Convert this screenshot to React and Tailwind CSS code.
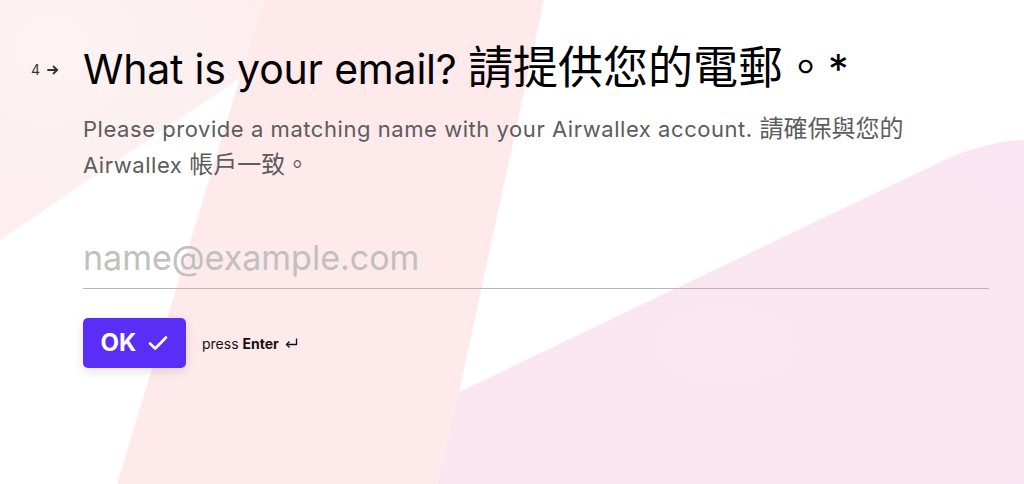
import React from "react";

function Background() {
  return (
    <svg
      className="absolute inset-0 h-full w-full"
      viewBox="0 0 1024 484"
      preserveAspectRatio="none"
      aria-hidden="true"
    >
      <defs>
        <radialGradient id="ga" cx="0.2" cy="0.2" r="0.9">
          <stop offset="0" stopColor="#fdf3f2" />
          <stop offset="1" stopColor="#fdeeee" />
        </radialGradient>
        <radialGradient id="gc" cx="0.5" cy="0.6" r="0.8">
          <stop offset="0" stopColor="#fbe7f0" />
          <stop offset="1" stopColor="#fae5f2" />
        </radialGradient>
      </defs>
      <polygon points="0,0 266,0 240,78 0,240" fill="url(#ga)" />
      <path
        d="M459 392 L932 166 Q980 142 1024 140 L1024 484 L430 484 Z"
        fill="url(#gc)"
      />
      <polygon points="264,0 544,0 459,392 438,484 117,484 240,78" fill="#fee9eb" />
    </svg>
  );
}

function SmallArrow() {
  return (
    <svg width="12" height="10" viewBox="0 0 12 10" fill="none">
      <path d="M1 5 H10" stroke="#333" strokeWidth="1.8" strokeLinecap="round" />
      <path
        d="M6.5 1.5 L10.2 5 L6.5 8.5"
        stroke="#333"
        strokeWidth="1.8"
        strokeLinecap="round"
        strokeLinejoin="round"
      />
    </svg>
  );
}

function CheckIcon() {
  return (
    <svg width="20" height="16" viewBox="0 0 20 16" fill="none">
      <path
        d="M2 8.5 L7.2 13.5 L18 2.5"
        stroke="white"
        strokeWidth="2.6"
        strokeLinecap="round"
        strokeLinejoin="round"
      />
    </svg>
  );
}

function ReturnIcon() {
  return (
    <svg width="13" height="11" viewBox="0 0 13 11" fill="none">
      <path d="M11.5 0.5 V6.5 H1.5" stroke="#111" strokeWidth="1.3" />
      <path d="M4.5 3.5 L1.5 6.5 L4.5 9.5" stroke="#111" strokeWidth="1.3" />
    </svg>
  );
}

export default function App() {
  return (
    <div className="relative h-[484px] w-[1024px] overflow-hidden bg-white font-['Inter','Noto_Sans_CJK_TC',sans-serif]">
      <Background />
      <div className="relative flex pl-[31px] pt-[44px]">
        <div className="mt-[16px] flex h-[20px] w-[52px] shrink-0 items-center gap-[7px] text-[14px] leading-[20px] text-[#333]">
          <span>4</span>
          <SmallArrow />
        </div>
        <div className="w-[906px]">
          <h1 className="text-[41px] leading-[48px] font-normal tracking-[-0.2px] text-black">
            What is your email? <span className="text-[45px] tracking-normal">請提供您的電郵。</span>*
          </h1>
          <p className="mt-[18px] text-[22px] leading-[35px] tracking-[0.55px] text-[#5c5c5c]">
            Please provide a matching name with your Airwallex account.{" "}
            <span className="text-[24px] tracking-normal">請確保與您的</span>
            <br />
            Airwallex <span className="text-[24px] tracking-normal">帳戶一致。</span>
          </p>
          <div className="mt-[53px] border-b border-[#b8b8b8] pb-[8px]">
            <input
              type="email"
              placeholder="name@example.com"
              className="block w-full bg-transparent text-[34px] leading-[44px] text-black outline-none placeholder:text-[#c0c0c0]"
            />
          </div>
          <div className="mt-[29px] flex items-center gap-4">
            <button className="flex h-[50px] w-[103px] items-center justify-center gap-[12px] rounded-[5px] bg-[#5a2ef6] text-[24px] font-bold text-white shadow-[0_3px_12px_rgba(0,0,0,0.12)]">
              <span>OK</span>
              <CheckIcon />
            </button>
            <span className="flex items-center gap-[6px] text-[14px] text-[#111]">
              <span>
                press <b className="font-bold">Enter</b>
              </span>
              <ReturnIcon />
            </span>
          </div>
        </div>
      </div>
    </div>
  );
}
